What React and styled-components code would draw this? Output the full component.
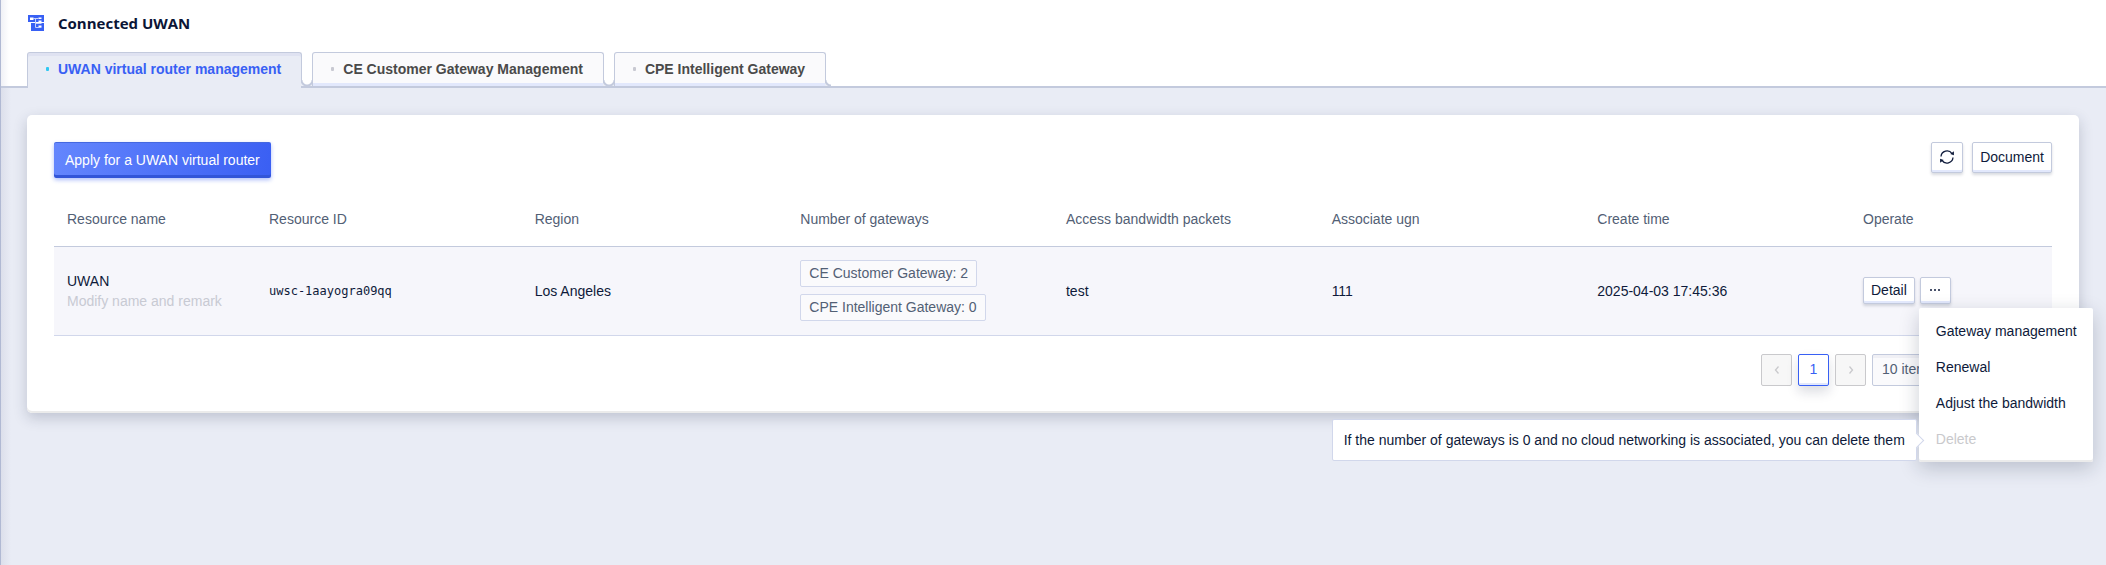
import React, { useState } from 'react';
import styled, { createGlobalStyle } from 'styled-components';

const tabs = [
  'UWAN virtual router management',
  'CE Customer Gateway Management',
  'CPE Intelligent Gateway',
];

const rows = [
  {
    name: 'UWAN',
    id: 'uwsc-1aayogra09qq',
    region: 'Los Angeles',
    gateways: ['CE Customer Gateway: 2', 'CPE Intelligent Gateway: 0'],
    bandwidth: 'test',
    ugn: '111',
    created: '2025-04-03 17:45:36',
  },
];

export default function App() {
  const [ activeTab, setActiveTab ] = useState(0);
  const [ isMenuOpen, setIsMenuOpen ] = useState(true);

  return (
    <Page>
      <GlobalStyle />
      <Header>
        <Title>
          <RouterIcon />
          <h1>Connected UWAN</h1>
        </Title>
        <Tabs>
          {tabs.map((tab, i) => (
            <Tab key={tab} type="button" $active={i === activeTab} onClick={() => setActiveTab(i)}>
              {tab}
            </Tab>
          ))}
        </Tabs>
      </Header>

      <Card>
        <Toolbar>
          <PrimaryButton type="button">Apply for a UWAN virtual router</PrimaryButton>
          <ToolbarRight>
            <Button type="button" $square aria-label="Refresh">
              <RefreshIcon />
            </Button>
            <Button type="button">Document</Button>
          </ToolbarRight>
        </Toolbar>

        <Table>
          <colgroup>
            <col className="edge" />
            <col />
            <col />
            <col />
            <col />
            <col />
            <col />
            <col className="edge" />
          </colgroup>
          <thead>
            <tr>
              <th>Resource name</th>
              <th>Resource ID</th>
              <th>Region</th>
              <th>Number of gateways</th>
              <th>Access bandwidth packets</th>
              <th>Associate ugn</th>
              <th>Create time</th>
              <th>Operate</th>
            </tr>
          </thead>
          <tbody>
            {rows.map((row) => (
              <tr key={row.id}>
                <td>
                  {row.name}
                  <Remark>Modify name and remark</Remark>
                </td>
                <td><Mono>{row.id}</Mono></td>
                <td>{row.region}</td>
                <td>
                  <TagList>
                    {row.gateways.map((gateway) => <Tag key={gateway}>{gateway}</Tag>)}
                  </TagList>
                </td>
                <td>{row.bandwidth}</td>
                <td>{row.ugn}</td>
                <td>{row.created}</td>
                <td>
                  <Actions>
                    <Button type="button" $small>Detail</Button>
                    <MenuAnchor>
                      <Button type="button" $small $square aria-label="More" onClick={() => setIsMenuOpen(!isMenuOpen)}>
                        <svg width="12" height="4" viewBox="0 0 12 4" fill="currentColor" aria-hidden="true">
                          <circle cx="2" cy="2" r="1" />
                          <circle cx="6" cy="2" r="1" />
                          <circle cx="10" cy="2" r="1" />
                        </svg>
                      </Button>
                      {isMenuOpen && (
                        <Menu>
                          <li><MenuItem type="button">Gateway management</MenuItem></li>
                          <li><MenuItem type="button">Renewal</MenuItem></li>
                          <li><MenuItem type="button">Adjust the bandwidth</MenuItem></li>
                          <li>
                            <MenuItem type="button" disabled aria-describedby="delete-tip">Delete</MenuItem>
                            <Tooltip id="delete-tip" role="tooltip">
                              If the number of gateways is 0 and no cloud networking is associated, you can delete them
                            </Tooltip>
                          </li>
                        </Menu>
                      )}
                    </MenuAnchor>
                  </Actions>
                </td>
              </tr>
            ))}
          </tbody>
        </Table>

        <Pagination>
          <PageButton type="button" disabled aria-label="Previous page">
            <svg width="6" height="8" viewBox="0 0 6 8" aria-hidden="true">
              <path fill="none" stroke="currentColor" strokeWidth="1.3" d="M4.500 .5L1.500 4l3 3.500" />
            </svg>
          </PageButton>
          <PageButton type="button" $current>1</PageButton>
          <PageButton type="button" disabled aria-label="Next page">
            <svg width="6" height="8" viewBox="0 0 6 8" aria-hidden="true">
              <path fill="none" stroke="currentColor" strokeWidth="1.3" d="M1.500 .5L4.500 4l-3 3.500" />
            </svg>
          </PageButton>
          <PageSize aria-label="Page size" defaultValue="10">
            <option value="10">10 items/page</option>
            <option value="20">20 items/page</option>
          </PageSize>
        </Pagination>
      </Card>
    </Page>
  )
}

function RouterIcon() {
  return (
    <svg width="16" height="16" viewBox="0 0 16 16" aria-hidden="true">
      <path fill="#3860f4" d="M0 0h16v7H0zM3 8h13v8H3z" />
      <path fill="#fff" d="M2 2.500h3.500v2.500H2zM10.500 2.500h3v1.500h-3zM10.500 5.500h3V7h-3zM10.500 10.500h3V12h-3z" />
      <path fill="none" stroke="#c5d0fc" d="M5 3.500h5.500M7.500 3.500v9h6M7.500 8.500h6" />
    </svg>
  )
}

function RefreshIcon() {
  return (
    <svg width="16" height="16" viewBox="0 0 16 16" aria-hidden="true">
      <path fill="none" stroke="currentColor" strokeWidth="1.3" d="M2 7.500A6 6 0 0 1 13 4.700M14 8.500A6 6 0 0 1 3 11.300" />
      <path fill="currentColor" d="M14.900 2.200v4.100l-3.600-1.300zM1.100 13.800V9.700l3.600 1.300z" />
    </svg>
  )
}

const GlobalStyle = createGlobalStyle`
  *{
    box-sizing: border-box;
  }

  body{
    margin: 0;
    background-color: #e9ecf5;
    color: #0e1a3a;
    font-family: 'Liberation Sans', Arial, sans-serif;
    font-size: 14px;
    line-height: 20px;
  }

  button, select{
    font: inherit;
    color: inherit;
    cursor: pointer;
  }
`;

const Page = styled.div`
  min-height: 100vh;
  border-left: 1px solid #b0b9d3;
  background-image: linear-gradient(to right, #dcdfeb, #e9ecf5 10px);
`;

const Header = styled.header`
  padding: 9px 26px 0;
  border-bottom: 2px solid #c3cadd;
  background: linear-gradient(to right, #f0f1f6, #fff 8px);
`;

const Title = styled.div`
  display: flex;
  align-items: center;
  gap: 14px;
  height: 28px;
  padding-left: 1px;

  h1{
    margin: 0;
    color: #0b1536;
    font-family: 'Open Sans', 'Noto Sans', sans-serif;
    font-size: 15px;
    font-weight: 700;
  }
`;

const Tabs = styled.nav`
  display: flex;
  gap: 10px;
  margin-top: 15px;
`;

const Tab = styled.button`
  position: relative;
  display: flex;
  align-items: center;
  gap: 9px;
  height: 34px;
  padding: 0 20px 2px 18px;
  border: 1px solid #c3cadd;
  border-bottom: none;
  border-radius: 3px 3px 0 0;
  background-color: #fafafc;
  box-shadow: inset 0 -3px 0 #e2e8fc;
  color: #4a4a4a;
  font-weight: 700;

  &::before{
    content: '';
    width: 3px;
    height: 4px;
    border-radius: 1px;
    background-color: #c8c9d2;
  }

  /* rounded foot that joins the tab to the line below */
  &::after{
    content: '';
    position: absolute;
    bottom: 0;
    left: 100%;
    width: 12px;
    height: 6px;
    background-image: radial-gradient(circle at 50% 0, #fff 4px, #c3cadd 5px, #c3cadd 6px, #e9ecf5 7px);
  }

  &:last-child::after{
    width: 6px;
    background-image: radial-gradient(circle at 100% 0, #fff 4px, #c3cadd 5px, #c3cadd 6px, #e9ecf5 7px);
  }

  ${({ $active }) => $active && `
    height: 36px;
    margin-bottom: -2px;
    padding-bottom: 4px;
    background-color: #e9ecf5;
    box-shadow: inset 0 3px 0 #dfe2f1;
    color: #3860f4;

    &::before{
      background-color: #2fc8f2;
    }

    &::after{
      bottom: 2px;
    }
  `}
`;

const Card = styled.main`
  margin: 27px 27px 0 26px;
  padding: 27px;
  border-radius: 5px;
  background-color: #fff;
  box-shadow: inset 0 -2px 0 #ebebeb, 0 5px 14px rgba(40, 50, 80, .22);
`;

const Toolbar = styled.div`
  display: flex;
  justify-content: space-between;
  align-items: flex-start;
`;

const ToolbarRight = styled.div`
  display: flex;
  gap: 9px;
`;

const PrimaryButton = styled.button`
  height: 36px;
  padding: 0 11px 1px;
  border: none;
  border-radius: 2px;
  background-image: linear-gradient(100deg, #6486fd, #3a5ff3);
  box-shadow: inset 0 1px 0 #4468e0, inset 0 -3px 0 #3255d8, 0 2px 4px rgba(56, 96, 244, .4);
  color: #fff;
`;

const Button = styled.button`
  display: flex;
  align-items: center;
  justify-content: center;
  height: ${({ $small }) => ($small ? '27px' : '31px')};
  min-width: ${({ $small }) => ($small ? '31px' : '32px')};
  padding: ${({ $square }) => ($square ? '0 0 2px' : '0 7px 2px')};
  border: 1px solid #c3cadd;
  border-radius: 2px;
  background-color: #fff;
  box-shadow: inset 0 -2px 0 #e2e8fc, 0 2px 3px rgba(20, 30, 60, .16);
`;

const Table = styled.table`
  width: 100%;
  margin-top: 14px;
  border-collapse: collapse;
  table-layout: fixed;

  col.edge{
    width: 202px;
  }

  th, td{
    padding: 0 13px;
    text-align: left;
  }

  th{
    height: 54px;
    border-bottom: 1px solid #c3cadd;
    color: #526075;
    font-weight: 400;
  }

  td{
    height: 89px;
    border-bottom: 1px solid #d1d7eb;
    background-color: #f6f6fb;
  }
`;

const Remark = styled.div`
  color: #c8cad3;
`;

const Mono = styled.code`
  font-family: 'DejaVu Sans Mono', monospace;
  font-size: 12px;
`;

const TagList = styled.div`
  display: flex;
  flex-direction: column;
  align-items: flex-start;
  gap: 7px;
`;

const Tag = styled.span`
  height: 27px;
  padding: 2px 8px;
  border: 1px solid #d1d7eb;
  border-radius: 2px;
  background-color: #fafafc;
  color: #526075;
`;

const Actions = styled.div`
  display: flex;
  gap: 5px;
`;

const MenuAnchor = styled.div`
  position: relative;
`;

const Menu = styled.ul`
  position: absolute;
  z-index: 1;
  top: 31px;
  left: -1px;
  margin: 0;
  padding: 5px 0;
  border-radius: 2px;
  background-color: #fff;
  box-shadow: inset 0 -2px 0 #ebebeb, 0 6px 20px rgba(20, 30, 60, .22);
  list-style: none;
  white-space: nowrap;

  li{
    position: relative;
  }
`;

const MenuItem = styled.button`
  display: block;
  width: 100%;
  height: 36px;
  padding: 0 16px 0 17px;
  border: none;
  background: none;
  text-align: left;

  &:disabled{
    color: #c9c9cc;
    cursor: not-allowed;
  }
`;

const Tooltip = styled.div`
  position: absolute;
  top: -2px;
  right: 100%;
  margin-right: 2px;
  padding: 10px 11px;
  border: 1px solid #d1d7eb;
  border-radius: 2px;
  background-color: #fff;

  &::after{
    content: '';
    position: absolute;
    top: 15px;
    right: -6px;
    width: 10px;
    height: 10px;
    border: solid #d1d7eb;
    border-width: 1px 1px 0 0;
    background-color: #fff;
    transform: rotate(45deg);
  }
`;

const Pagination = styled.nav`
  display: flex;
  justify-content: flex-end;
  gap: 6px;
  margin-top: 18px;
`;

const PageButton = styled.button`
  display: flex;
  align-items: center;
  justify-content: center;
  width: 31px;
  height: 32px;
  padding: 0 0 2px;
  border: 1px solid #3860f4;
  border-radius: 2px;
  background-color: #fff;
  box-shadow: inset 0 -2px 0 #e2e8fc, 0 6px 12px rgba(20, 30, 60, .15);
  color: #3860f4;

  &:disabled{
    padding: 0;
    border-color: #c9c9cc;
    background-color: #f7f7f7;
    box-shadow: none;
    color: #c9c9cc;
  }
`;

const PageSize = styled.select`
  width: 180px;
  padding: 0 9px 2px;
  border: 1px solid #c3cadd;
  border-radius: 2px;
  background-color: #fafafc;
  box-shadow: inset 0 3px 0 #f0f0f5;
  color: #526075;
  appearance: none;
`;
